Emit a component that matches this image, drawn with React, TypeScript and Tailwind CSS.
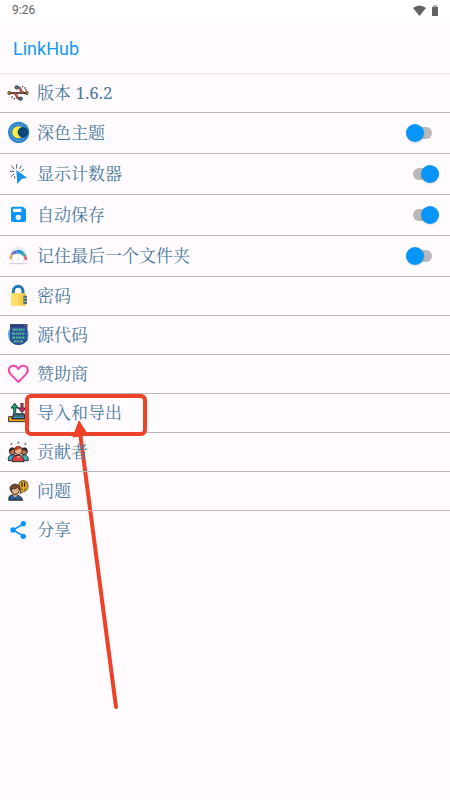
import type { ReactNode } from "react";

function Icon({ children }: { children: ReactNode }) {
	return (
		<svg viewBox="0 0 60 60" className="size-5 shrink-0 overflow-visible" fill="none" aria-hidden="true">
			{children}
		</svg>
	);
}

function VersionIcon() {
	return (
		<Icon>
			<path d="M4 30H56" stroke="#4b3030" strokeWidth="6" />
			<path d="M10 30H48" stroke="#c9665a" strokeWidth="2" />
			<path d="M26 13H31Q37 14 38 21T47 29M18 31Q25 32 26 39T35 46H38" stroke="#5b3434" strokeWidth="7" />
			<path d="M28 13Q35 13 37 21T46 28M19 32Q26 33 27 40T36 46" stroke="#d3604f" strokeWidth="4" />
			<circle cx="4" cy="30" r="5" fill="#8c7526" stroke="#59491f" strokeWidth="2" />
			<circle cx="56" cy="30" r="5" fill="#8c7526" stroke="#59491f" strokeWidth="2" />
			<circle cx="26" cy="13" r="5" fill="#477d91" stroke="#303e48" strokeWidth="3" />
			<circle cx="38" cy="47" r="5" fill="#477d91" stroke="#303e48" strokeWidth="3" />
			<path d="M42 11h4M49 15h4M52 21h4M10 42h4M17 47h4" stroke="#49333a" strokeWidth="4" />
		</Icon>
	);
}

function ThemeIcon() {
	return (
		<Icon>
			<circle cx="32" cy="28" r="32" fill="#2e86cf" />
			<circle cx="31" cy="28" r="24" stroke="#d6dd86" strokeWidth="3" strokeDasharray="3 7" />
			<circle cx="31" cy="28" r="18" fill="#ffeb3b" />
			<circle cx="45" cy="28" r="16" fill="#0a4678" />
		</Icon>
	);
}

function CounterIcon() {
	return (
		<Icon>
			<path d="M26 0V14M11 5L18 16M40 5L35 15M5 22H19M8 39L18 30M48 16L39 22M20 36V44" stroke="#52606c" strokeWidth="3" />
			<path d="M25 18L58 42L42 44L28 60Z" fill="#1691ef" />
		</Icon>
	);
}

function SaveIcon() {
	return (
		<Icon>
			<path
				d="M14 5H45L54 14V46Q54 51 48 51H14Q9 51 9 46V10Q9 5 14 5ZM15 11V21H40V11ZM31 29A8 8 0 1 0 31 45A8 8 0 1 0 31 29Z"
				fill="#0795fa"
				fillRule="evenodd"
			/>
		</Icon>
	);
}

function FolderIcon() {
	return (
		<Icon>
			<circle cx="31" cy="28" r="27" fill="#ececf0" />
			<path d="M8 40Q8 29 15 24" stroke="#e4a94d" strokeWidth="8" />
			<path d="M13 25Q18 18 26 17" stroke="#6870bf" strokeWidth="9" />
			<path d="M25 18Q36 15 44 22" stroke="#2f92e0" strokeWidth="11" />
			<path d="M42 22Q49 27 51 32" stroke="#4ba38a" strokeWidth="9" />
			<path d="M50 31Q54 37 54 42" stroke="#d66570" strokeWidth="8" />
			<path d="M14 31Q15 25 19 25H28L32 29H42Q46 29 46 33V52H14Z" fill="white" stroke="#e8e7f2" strokeWidth="2" />
			<path d="M4 53H58" stroke="#cfc9df" strokeWidth="3" />
			<circle cx="31" cy="39" r="2" fill="#b7bed1" />
		</Icon>
	);
}

function PasswordIcon() {
	return (
		<Icon>
			<path d="M16 26V17C16 -5 45 -5 45 17V26" stroke="#2479b7" strokeWidth="9" />
			<path d="M11 22H51Q54 22 54 25V59H9V25Q9 22 11 22Z" fill="#f6cf4e" />
			<path d="M9 25Q9 22 11 22H31V59H9Z" fill="#ffe06c" />
			<path d="M46 32H57M46 41H57M46 50H57" stroke="#235f91" strokeWidth="6" />
			<path d="M48 29V56" stroke="#7c9163" strokeWidth="2" />
		</Icon>
	);
}

function CodeIcon() {
	return (
		<Icon>
			<circle cx="31" cy="29" r="31" fill="#47a8e8" />
			<path d="M6 -2H58V46Q48 60 31 60T6 46Z" fill="#304d98" />
			<path d="M6 -2H58V5H6Z" fill="#243c72" />
			<path d="M14 14H50M12 26H52M12 38H52M17 49H46" stroke="#48b494" strokeWidth="7" strokeDasharray="9 2 6 2" />
			<path d="M47 2h3M53 2h3" stroke="#e77577" strokeWidth="3" />
		</Icon>
	);
}

function SponsorIcon() {
	return (
		<Icon>
			<path
				d="M31 54L9 32C-4 19 4 5 17 5Q26 5 31 15Q36 5 45 5C59 5 65 19 53 32Z"
				stroke="#ee4bb0"
				strokeWidth="6"
				strokeLinejoin="round"
			/>
		</Icon>
	);
}

function TransferIcon() {
	return (
		<Icon>
			<path d="M20 30V9" stroke="#24303a" strokeWidth="9" />
			<path d="M9 15L20 1L31 15Z" fill="#15a66d" stroke="#24303a" strokeWidth="3" />
			<path d="M20 30V11" stroke="#15a66d" strokeWidth="5" />
			<path d="M42 0V20" stroke="#282d38" strokeWidth="9" />
			<path d="M31 15L42 29L53 15Z" fill="#ce2864" stroke="#282d38" strokeWidth="3" />
			<path d="M42 2V18" stroke="#ce2864" strokeWidth="5" />
			<path d="M17 33H48L52 48H12Z" fill="#4d91b1" stroke="#26323e" strokeWidth="4" />
			<path d="M19 39H46" stroke="#263e4c" strokeWidth="3" />
			<path d="M2 41H12V48H53V41H62V56H2Z" fill="#f9a916" stroke="#283039" strokeWidth="3" />
		</Icon>
	);
}

function ContributorsIcon() {
	return (
		<Icon>
			<path d="M10 2v8M6 6h8M31 -2v8M27 2h8M52 2v8M48 6h8" stroke="#6c6267" strokeWidth="2" />
			<g stroke="#342a2d" strokeWidth="3">
				<path d="M1 56V47Q3 38 15 38Q25 38 25 56Z" fill="#38a9d0" />
				<path d="M38 56Q38 38 50 38Q61 40 61 56Z" fill="#36b7ae" />
				<circle cx="14" cy="28" r="10" fill="#bf7851" />
				<circle cx="48" cy="28" r="10" fill="#bf7851" />
				<path d="M13 59V50Q16 39 31 39Q46 39 48 59Z" fill="#e33b40" />
				<circle cx="31" cy="26" r="12" fill="#f0ae7c" />
			</g>
			<path d="M4 28Q4 14 15 17L21 21Q14 22 5 31ZM41 22Q47 14 56 18L59 30Q50 23 41 25Z" fill="#302d34" />
			<path d="M19 26Q18 11 31 12Q44 12 43 26L36 19Q28 24 19 26Z" fill="#a34728" />
			<path d="M28 42L31 48L35 42" stroke="#f6cca5" strokeWidth="3" />
		</Icon>
	);
}

function QuestionIcon() {
	return (
		<Icon>
			<path d="M33 15Q32 -1 45 -1Q61 -1 60 16Q59 31 47 31L36 38L38 28Q33 24 33 15Z" fill="#e9ad1c" stroke="#655019" strokeWidth="3" />
			<path d="M42 4V18M50 4V18M42 23V26M50 23V26" stroke="#33312c" strokeWidth="4" />
			<path d="M3 57V51Q5 42 19 41Q38 42 43 57Z" fill="#2a639a" stroke="#29323a" strokeWidth="4" />
			<path d="M15 36V42L22 50L29 42V36Z" fill="#e9b58c" />
			<path d="M9 21Q11 12 22 13Q36 14 34 29Q31 41 22 41Q12 40 9 29Z" fill="#e7ad81" stroke="#302c2b" strokeWidth="3" />
			<path d="M6 27Q4 11 21 9Q37 10 37 26L28 20Q18 27 11 22V33Z" fill="#76492f" stroke="#302c2b" strokeWidth="2" />
			<path d="M22 49V57" stroke="#222f3d" strokeWidth="3" />
		</Icon>
	);
}

function ShareIcon() {
	return (
		<Icon>
			<path d="M46 12L15 30L46 48" stroke="#0795fa" strokeWidth="5" />
			<circle cx="46" cy="11" r="8" fill="#0795fa" />
			<circle cx="15" cy="30" r="8" fill="#0795fa" />
			<circle cx="46" cy="49" r="8" fill="#0795fa" />
		</Icon>
	);
}

const toggles = [
	{ id: "theme", label: "深色主题", icon: <ThemeIcon />, on: false },
	{ id: "counter", label: "显示计数器", icon: <CounterIcon />, on: true },
	{ id: "autosave", label: "自动保存", icon: <SaveIcon />, on: true },
	{ id: "folder", label: "记住最后一个文件夹", icon: <FolderIcon />, on: false },
];

const links = [
	{ label: "密码", icon: <PasswordIcon /> },
	{ label: "源代码", icon: <CodeIcon /> },
	{ label: "赞助商", icon: <SponsorIcon /> },
	{ label: "导入和导出", icon: <TransferIcon /> },
	{ label: "贡献者", icon: <ContributorsIcon /> },
	{ label: "问题", icon: <QuestionIcon /> },
	{ label: "分享", icon: <ShareIcon /> },
];

function StatusBar() {
	return (
		<div className="flex h-5 items-center justify-between bg-white px-3 font-[Roboto,sans-serif] text-xs font-normal text-[#626262]">
			<span>9:26</span>
			<div className="flex items-center gap-1.5">
				<svg viewBox="0 0 13 11" className="h-[11px] w-[13px]" fill="#626262" aria-hidden="true">
					<path d="M0 3Q6.500-2 13 3L6.500 11Z" />
				</svg>
				<svg viewBox="0 0 6 11" className="h-[11px] w-1.5" fill="#626262" aria-hidden="true">
					<path d="M0 2H6V11H0Z" />
					<path d="M1 0H5V2H1Z" opacity="0.5" />
				</svg>
			</div>
		</div>
	);
}

// Hand-drawn marker pointing at the import and export row
function Marker() {
	return (
		<svg
			viewBox="0 0 130 320"
			className="pointer-events-none absolute top-0 left-6 h-80 w-[130px]"
			fill="none"
			aria-hidden="true"
		>
			<rect x="3" y="2" width="118" height="38" rx="4" stroke="#ee4228" strokeWidth="4" />
			<path d="M56 38L92 313" stroke="#ee4228" strokeWidth="4" strokeLinecap="round" />
			<path d="M55 27L49 43L64 41Z" fill="#ee4228" stroke="#ee4228" strokeWidth="1" strokeLinejoin="round" />
		</svg>
	);
}

export default function App() {
	return (
		<div className="min-h-screen bg-[#fffbff] font-['Noto_Serif','Liberation_Serif','Noto_Serif_CJK_SC','Noto_Sans_CJK_SC',serif] text-[17px] text-[#47799b]">
			<StatusBar />
			<header className="flex h-[54px] items-center border-b border-[#ece8ec] px-[13px] pt-1 shadow-xs">
				<h1 className="font-[Roboto,sans-serif] text-lg font-normal text-[#1699f3]">LinkHub</h1>
			</header>
			<main>
				<div className="flex h-[39px] items-center gap-[9px] border-b border-[#b9b7bb] px-2">
					<VersionIcon />
					<span>版本 1.6.2</span>
				</div>
				{toggles.map((item) => (
					<div key={item.id} className="flex h-[41px] items-center gap-[9px] border-b border-[#b9b7bb] pr-[11px] pl-2">
						{item.icon}
						<label htmlFor={item.id} className="flex-1">
							{item.label}
						</label>
						<input
							id={item.id}
							type="checkbox"
							role="switch"
							defaultChecked={item.on}
							className="relative h-[18px] w-[33px] appearance-none before:absolute before:top-[3px] before:left-0 before:h-3 before:w-[26px] before:rounded-full before:bg-[#b9b9b9] after:absolute after:top-0 after:left-0 after:size-[18px] after:rounded-full after:bg-[#0795fa] after:shadow-sm checked:before:left-[7px] checked:after:left-[15px]"
						/>
					</div>
				))}
				{links.map((item) => (
					<div key={item.label} className="relative border-b border-[#b9b7bb] last:border-b-0">
						<button type="button" className="flex h-[38px] w-full items-center gap-[9px] px-2 text-left">
							{item.icon}
							<span>{item.label}</span>
						</button>
						{item.label === "导入和导出" && <Marker />}
					</div>
				))}
			</main>
		</div>
	);
}
